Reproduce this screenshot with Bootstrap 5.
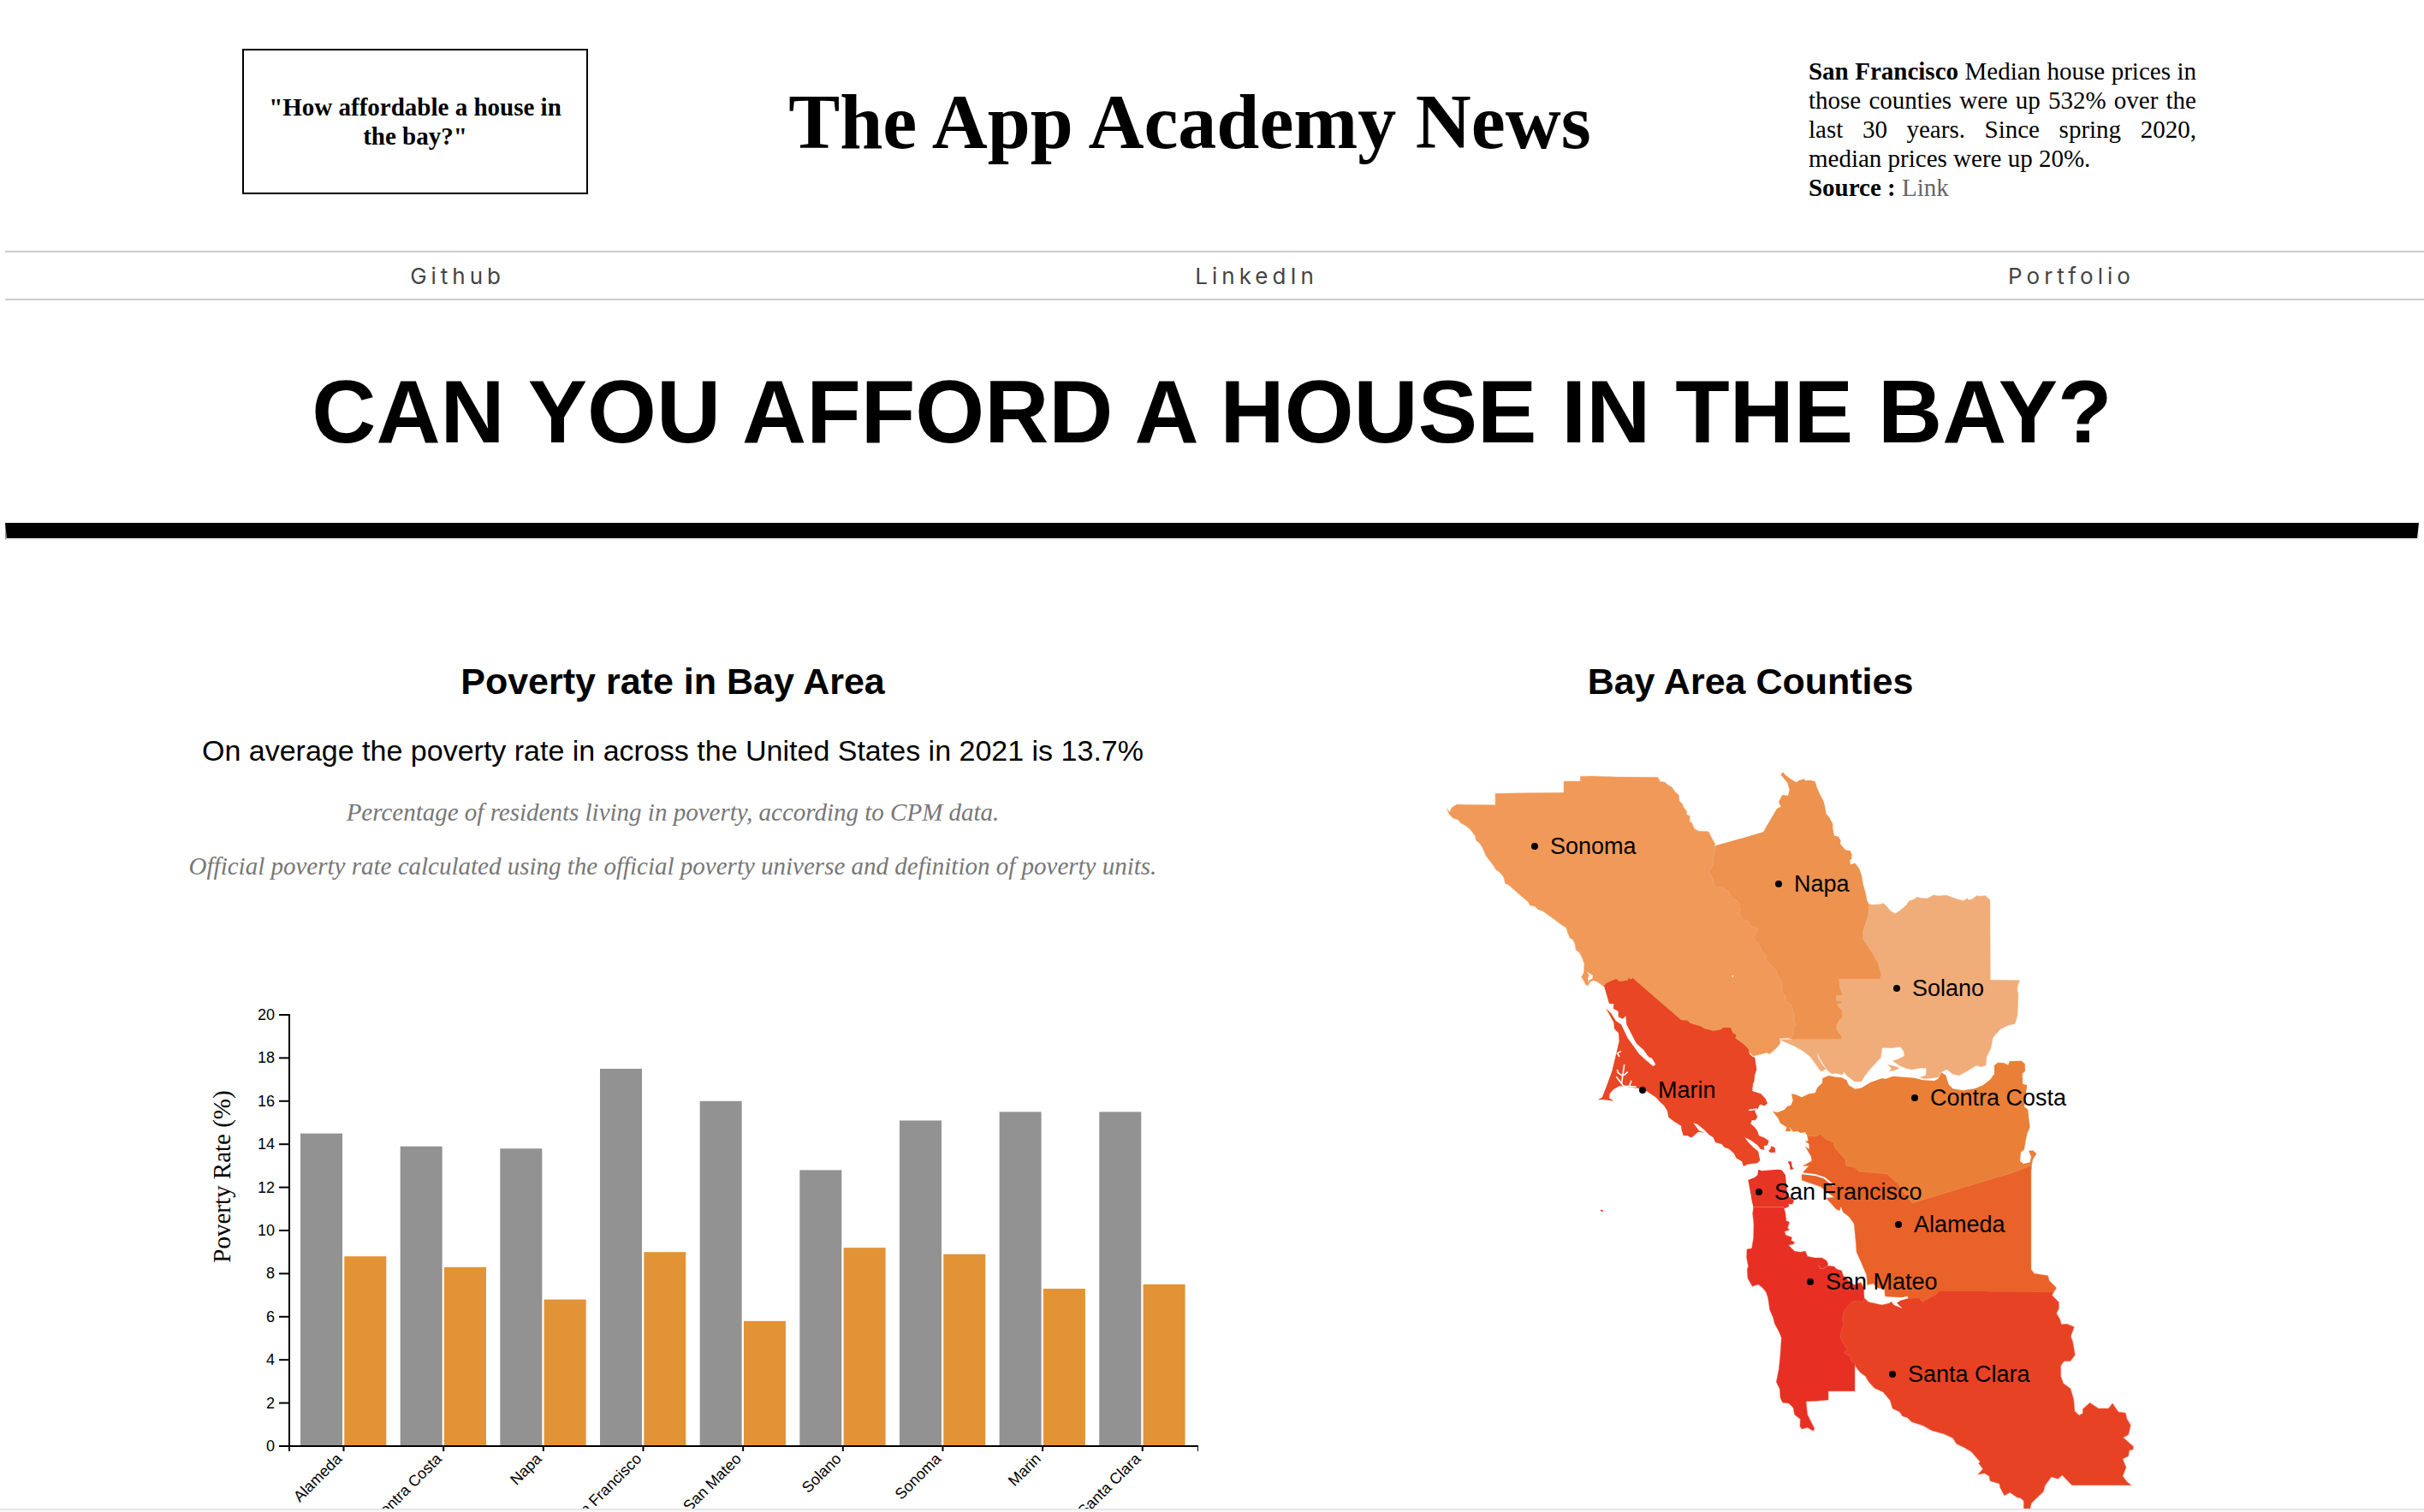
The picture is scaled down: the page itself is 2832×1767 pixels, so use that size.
<!DOCTYPE html>
<html lang="en">
<head>
<meta charset="utf-8">
<meta name="viewport" content="width=device-width, initial-scale=1">
<title>The App Academy News</title>
<link href="https://cdn.jsdelivr.net/npm/bootstrap@5.3.0/dist/css/bootstrap.min.css" rel="stylesheet">
<style>
body{font:29px/34px "Liberation Serif",serif;color:#000;background:#fff}
.paper{min-height:0}
.masthead{padding:57px 266px 57px 283px}
.pitch{width:404px;height:170px;border:2px solid #000;padding:0 24px}
.news-title{font-size:90px;line-height:100px;font-weight:700;margin:36px 20px 0 0}
.fact{width:453px;text-align:justify;padding-top:9px}
.fact a{color:#666}
.topnav{margin-left:6px;height:58px;border:solid #ccc;border-width:2px 0}
.topnav ul{padding-left:70px;margin-right:-65px}
.topnav a{font:26px/34px Inter,sans-serif;letter-spacing:5px;color:#444}
.headline{font:700 104px/120px "Liberation Sans",sans-serif;padding:70px 0;margin:0}
.rule{margin:0 6px;opacity:1;border:2px inset #eee;border-top:18px solid #000}
.sans{font-family:"Liberation Sans",sans-serif}
.sec-title{font-size:43px;line-height:50px;font-weight:700;margin:0}
.report{padding:140px 308px 0 6px}
.map-col{width:958px}
.lead-line{font-size:34px;line-height:40px;margin:36px 0 35px}
.note{font-style:italic;color:#777;margin:0 0 29px}
.chart{margin-top:82px}
.map-svg{margin-top:59px}
.foot-edge{height:4px;background:#f8f8f8;border-top:2px solid #e7e7e7}
svg{display:block}
</style>
<script src="https://cdn.jsdelivr.net/npm/bootstrap@5.3.0/dist/js/bootstrap.bundle.min.js"></script>
</head>
<body class="vh-100 overflow-hidden d-flex flex-column">
<div class="paper flex-grow-1 overflow-hidden">
  <header class="masthead d-flex justify-content-between align-items-start">
    <div class="pitch d-flex align-items-center text-center fw-bold"><span>"How affordable a house in the bay?"</span></div>
    <h1 class="news-title">The App Academy News</h1>
    <div class="fact"><b>San Francisco</b> Median house prices in those counties were up 532% over the last 30 years. Since spring 2020, median prices were up 20%.<br><b>Source :</b> <a href="#" class="text-decoration-none">Link</a></div>
  </header>
  <nav class="topnav">
    <ul class="list-unstyled d-flex justify-content-around align-items-center h-100 mb-0">
      <li><a class="text-decoration-none" href="#">Github</a></li>
      <li><a class="text-decoration-none" href="#">LinkedIn</a></li>
      <li><a class="text-decoration-none" href="#">Portfolio</a></li>
    </ul>
  </nav>
  <h2 class="headline text-center">CAN YOU AFFORD A HOUSE IN THE BAY?</h2>
  <hr class="rule">
  <main class="report d-flex">
    <section class="flex-grow-1 d-flex flex-column align-items-center text-center">
      <h3 class="sec-title sans">Poverty rate in Bay Area</h3>
      <p class="lead-line sans">On average the poverty rate in across the United States in 2021 is 13.7%</p>
      <p class="note">Percentage of residents living in poverty, according to CPM data.</p>
      <p class="note">Official poverty rate calculated using the official poverty universe and definition of poverty units.</p>
      <svg class="chart" width="1228" height="760" viewBox="172 1140 1228 760" role="img" aria-label="Poverty rate by county">
        <g id="bars"></g>
        <path d="M326 1186H338V1690M326 1690H1400V1696M338 1690V1696" fill="none" stroke="#000" stroke-width="2"/>
        <g id="ticks" font-family="'Liberation Sans',sans-serif" font-size="18" text-anchor="end"></g>
        <text transform="translate(269 1375) rotate(-90)" text-anchor="middle" font-size="29">Poverty Rate (%)</text>
      </svg>
    </section>
    <section class="map-col flex-shrink-0">
      <h3 class="sec-title sans text-center">Bay Area Counties</h3>
      <svg class="map-svg" width="958" height="1000" viewBox="1566 880 958 1000" role="img" aria-label="Map of the Bay Area counties">
        <g stroke-width="1.5" stroke-linejoin="round">
        <path transform="translate(2000 880) scale(.33333)" fill="#ed924f" d="M13 325L180 277L228 195L242 188L234 172L247 147L267 149L272 130L265 105L241 76L249 67L258 77L275 90L296 103L304 97L323 91L328 97L345 95L362 100L368 120L380 148L390 165L396 185L400 212L413 227L424 250V265L429 290L444 293L452 308L450 318L468 340L484 342L491 355L490 372L484 375L486 391L502 386L517 406L525 430L530 460L540 495L543 515L551 530L580 560L620 800L480 1005H283L240 990L200 800L100 650L-20 500V420Z"/>
        <path transform="translate(1660 880) scale(.33333)" fill="#f09959" stroke="#f4b081" d="M91 194L101 208L108 192L126 180L150 181L261 182V142L360 140L501 139V99H559V82L600 81L690 84L831 85L838 100L855 102L866 112L880 120L892 137L904 147L906 168L916 178L922 192L932 205L931 215L943 221L942 240L951 246L959 266L974 274L1008 275L1018 295L1031 318L1032 345L1023 372L1026 390L1010 417L1024 440L1025 458L1040 471L1058 473L1080 487L1092 512L1108 517L1118 530L1115 542L1123 548L1115 560L1130 588L1146 589L1154 605L1178 614L1181 625L1165 648L1190 680L1194 693L1213 712L1205 724L1225 740L1246 765L1256 790L1269 805L1265 820L1268 848L1278 852V868L1300 887L1308 915V942L1316 950L1305 965L1308 975L1299 998L1257 1001L1260 1018L1245 1036L1222 1055L1212 1051L1165 1063L1100 1000L900 960L740 820L640 818L618 802L604 797L597 800L590 808L586 815L578 812L570 797L563 786L571 770L573 740L567 722L556 700L543 690L541 672L533 655L522 648L514 628L509 612L495 604L470 585L445 567L425 553L412 550L400 538L382 534L376 522L350 500L325 478L307 462L296 458L290 435L278 420L262 408L258 400L240 376L228 360L215 330L205 315L194 307L190 290L175 270L160 257L140 245L130 234L112 228L98 213Z"/>
        <path transform="translate(1660 880) scale(.33333)" fill="#fff" d="M583 767L603 780L601 792L590 795L588 808L585 790L590 780ZM1091 780h4v5h-4z"/>
        <path transform="translate(2000 880) scale(.33333)" fill="#f0ad79" stroke="#f4b98c" d="M551 530L563 532L585 531L602 527L615 540L625 553L643 563L660 552L683 532L690 520L710 512L719 505L735 509L755 510L777 498L795 501L822 499L850 509L870 515L882 518L895 509L899 515L912 513L928 500L940 502L958 500L975 515L976 796L1079 797L1070 822L1074 850L1071 920L1062 950L1040 954L1010 969L985 998L978 1035L963 1065L960 1095L945 1100L926 1096L900 1112L866 1131L845 1126L823 1109L803 1120L795 1136L770 1140L745 1142L730 1137L750 1130L752 1105L735 1104L700 1110L680 1105L660 1097L634 1080L650 1075L675 1062L672 1045L660 1030L630 1034L597 1033L592 1068L560 1102L537 1130L524 1152H500L485 1140L475 1133L463 1118L458 1128L435 1123L420 1125L405 1112L390 1090L378 1070L370 1050L372 1068L385 1090L400 1108L383 1117L365 1093L345 1065L320 1045L290 1028L260 1015L237 1005L283 1004H455V992L437 970L438 955L447 935L457 930V905L440 885V880L456 878V870L436 868L437 850H460L450 825L446 793H590L594 775L582 735L565 705L530 652V625L548 570ZM617 1093L640 1098L657 1105L640 1113L622 1115L630 1106Z"/>
        <g transform="translate(1820 1120) scale(.33333)">
          <path fill="#e84625" d="M162 97L170 87L195 76L205 72L215 81L245 77L247 69L258 74L262 68L275 80L432 216L455 218L465 228L500 238L515 247L545 254L572 250L580 243H606L613 262L625 268L622 280L650 300L668 318L672 335L682 344L691 348L697 390L690 410L689 430L684 440L682 465L712 475L728 492L735 508L725 517L708 512L700 530L690 533L695 545L700 556L692 568L680 568L676 580L690 592L700 605L705 622L722 628L740 640L735 655L722 658L724 672L710 668L700 655L690 648L678 638L655 628L668 645L685 662L703 677L705 690L709 708L700 718L680 720L665 722L651 729L645 712L625 700L618 685L600 668L583 662L575 652L552 645L545 628L520 612L492 608L472 626L465 628L455 622L440 622L434 602L432 587L408 572L388 557L384 535L372 516L355 500L345 488L325 475L305 462L280 455L240 450L215 448L195 460L182 475L180 490L197 500L165 496L140 495L155 488L168 455L190 395L208 320L215 290L213 262L198 247L196 225L180 195L168 175L190 195L196 160L180 158ZM738 675L745 668L748 658L761 664L763 680L745 681ZM148 883L155 881L161 886L155 889Z"/>
          <path fill="#fff" d="M180 163L196 160L194 176L212 185V205L228 212L238 202L241 232L258 265L275 298L300 320L318 345L330 350L343 372L334 378L310 358L285 335L265 307L245 280L232 252L222 232L203 218L185 190L166 170ZM475 577L490 582L512 600L530 618L495 604Z"/>
          <path fill="none" stroke="#fff" stroke-width="5" d="M232 450L205 415M224 438L233 372M227 412L210 400L209 390M232 410L245 398M250 450L258 428M232 448L275 450M206 335L222 325M210 335L216 345M670 532L700 528"/>
          <path fill="#e63524" d="M667 777L690 768L700 760L703 740L715 745L770 740L785 742L798 760L802 800L805 830L828 850L822 862L808 862L812 868L800 875H686L680 850L675 820ZM806 713L818 711L822 733L828 737L815 742L813 725Z"/>
        </g>
        <path transform="translate(2020 1340) scale(.33333)" fill="#e73023" stroke="#ea5238" d="M86 212H192L198 235L200 260L212 265L205 285L212 292L195 297L198 310L220 318L218 330L230 335L225 342L208 345L230 367L250 370L268 367L275 385L300 390H325L340 398L347 410L345 418L368 420L378 430L395 435L400 452L420 470L440 485L462 476L472 495L474 530L480 560L470 760L441 765V857H348V888L305 892L270 893L275 940L290 970L299 988L296 997L275 985L255 990L249 980L250 955L230 940L225 915L210 900L188 897L180 880L178 850L166 825L175 780L180 730L184 670L176 650L160 620L155 600L143 572L137 530L130 510L118 495L103 483L82 490L66 462L64 430L68 420L62 390L63 360L80 357L86 320L87 270L83 235Z"/>
        <path transform="translate(2020 1340) scale(.33333)" fill="none" stroke="#f0876c" stroke-width="2" d="M86 212H192M314 415L320 428L335 426L346 418"/>
        <g transform="translate(2060 1200) scale(.33333)">
          <path fill="#ea8037" d="M33 296L50 300L75 290L85 278L97 275L104 258L99 235L115 238L135 247L160 235L182 232L190 212L207 197L208 180L230 171L255 176L275 178L292 187L300 205L322 218L345 214L375 195L415 181L430 182L455 173L530 179L560 187L600 189L613 182L625 160L640 170L650 202L665 217L700 223L740 217L770 205L795 185L810 165V135L822 125L845 127L858 134L864 120L905 119L917 130L918 155L908 165L910 200L925 205L922 225L915 280L928 290L932 330L935 352L925 375L920 400L915 430L903 440L900 470L912 480L935 475L939 455L930 435L945 433L958 445L945 465L941 487V500L522 625L300 520L200 400L155 384L148 370L130 372L120 366L105 368L90 350L98 366L78 366L82 352L60 338L52 320Z"/>
          <path fill="#e96229" stroke="#ee9560" d="M155 384L190 383L200 375L222 395L245 405L252 425L270 445L288 465L290 487L320 492L335 507L433 515L470 548L495 583L522 618L820 527L870 513L939 486V850L950 865L998 872L1003 890L1028 915L1015 935L620 940L560 970L505 950L427 945L425 920L400 915L385 900L365 905L362 870L345 830L327 790L325 760L318 690L300 665L280 650L272 630L268 645L256 640L220 600L248 598L200 560L135 538V515L160 487L138 488L170 470L168 455L148 420L162 430L160 410L148 402L158 400Z"/>
          <path fill="none" stroke="#fff" stroke-width="6" d="M130 513L185 520L215 530L248 557"/>
        </g>
        <path transform="translate(2140 1480) scale(.33333)" fill="#e84225" stroke="#ec6f50" d="M30 245L38 215L42 200L38 180L45 155L70 125L85 121L110 125L115 112L130 125L145 128L175 135L200 130L220 117L265 112L305 110L318 124L365 98L378 86H545L560 88L776 89L773 102L796 125V148L788 165L800 185L805 203L825 202L850 212L838 245L845 265L853 310L837 332H815L803 348V385L812 410L837 428L848 465L852 508L867 522L880 515V500L905 478L935 498H970L984 480L1005 510L1030 514L1035 535L1048 557L1040 590L1022 600L1058 632L1056 642L1043 645L1040 665L1020 675L1032 705L1020 735L1035 755L1050 767H842L808 732L793 745L770 738L748 768L742 790L715 815L700 830L694 855H673V822L662 812L650 810L625 793L605 803L590 775L588 762L555 752L552 735L535 725L512 730L530 710L515 690L520 685L500 662L490 650L465 635L437 622L425 602L395 588L350 575L320 558L280 545L265 530L248 525L238 510L213 498L205 470L180 440L150 427L130 405L118 385L100 372L83 350L80 338L68 330L65 315L42 302L55 292L38 265Z"/>
        <path transform="translate(2140 1480) scale(.33333)" fill="#fff" d="M205 118L235 112L265 104L268 112L240 120L228 128L248 148L218 135Z"/>
        </g>
        <g id="places" font-family="'Liberation Sans',sans-serif" font-size="27"></g>
      </svg>
    </section>
  </main>
</div>
<div class="foot-edge flex-shrink-0"></div>
<script>
const data=[["Alameda",14.5,8.8],["Contra Costa",13.9,8.3],["Napa",13.8,6.8],["San Francisco",17.5,9],["San Mateo",16,5.8],["Solano",12.8,9.2],["Sonoma",15.1,8.9],["Marin",15.5,7.3],["Santa Clara",15.5,7.5]];
const base=1690,unit=25.2,step=116.66;
let bars="",ticks="";
data.forEach(([name,a,b],i)=>{
  const x=351+i*step,t=401.5+i*step;
  bars+=`<rect x="${x}" y="${base-a*unit}" width="49" height="${a*unit}" fill="#929292"/><rect x="${x+51.3}" y="${base-b*unit}" width="49" height="${b*unit}" fill="#e29336"/>`;
  ticks+=`<path d="M${t} 1690v6" stroke="#000" stroke-width="2"/><text transform="translate(${t-1} 1706) rotate(-45)">${name}</text>`;
});
for(let v=0;v<=20;v+=2){
  const y=base-v*unit;
  ticks+=`<path d="M326 ${y}h12" stroke="#000" stroke-width="2"/><text x="321" y="${y+6}">${v}</text>`;
}
document.getElementById("bars").innerHTML=bars;
document.getElementById("ticks").innerHTML=ticks;
document.getElementById("places").innerHTML=[["Sonoma",1793,989],["Napa",2078,1033],["Solano",2216,1155],["Marin",1919,1274],["San Francisco",2055,1393],["Contra Costa",2237,1283],["Alameda",2218,1431],["San Mateo",2115,1498],["Santa Clara",2211,1606]]
  .map(([n,x,y])=>`<circle cx="${x}" cy="${y}" r="4"/><text x="${x+18}" y="${y+9}">${n}</text>`).join("");
</script>
</body>
</html>
